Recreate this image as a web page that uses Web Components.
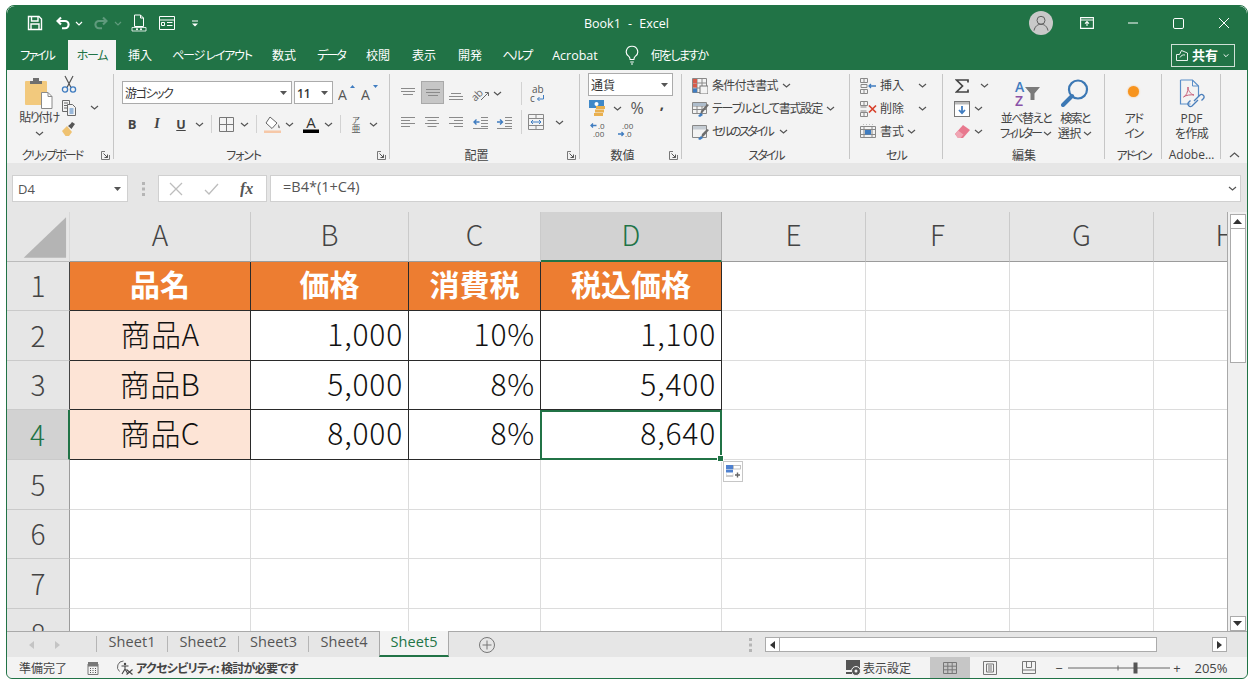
<!DOCTYPE html>
<html lang="ja"><head><meta charset="utf-8"><title>Book1 - Excel</title>
<style>html,body{margin:0;padding:0;background:#fff;overflow:hidden}body{font-family:"Noto Sans CJK JP","Noto Sans",sans-serif}</style>
</head><body><x-window></x-window>
<script>
const JP="'Noto Sans CJK JP','Noto Sans',sans-serif", LAT="'Open Sans','Noto Sans CJK JP',sans-serif";
const GR='#6a6a6a',BL='#3f7cc0',W='#fff';
const ln=(d,c=GR,sw=1)=>`<path d="${d}" fill="none" stroke="${c}" stroke-width="${sw}"/>`;
const lines3=(a)=>ln(a,'#8a8a8a');
const ICONS={
 save:[16,16,ln('M1.5 1.5h10.5l2.5 2.5v10.5h-13z M4.5 1.5v4.5h6.5v-4.5 M4 14.5v-5.5h8v5.5',W,1.4)],
 undo:[16,16,ln('M6 2.5L2.5 6 6 9.5 M3 6h7a3.6 3.6 0 0 1 0 7.2H7',W,2.1)],
 redo:[16,16,ln('M10 2.5L13.5 6 10 9.5 M13 6H6a3.6 3.6 0 0 0 0 7.2h3','#5f9a7c',2.1)],
 chevw:[8,5,ln('M1 1l3 3 3-3',W,1.2)],
 chevd:[8,5,ln('M1 1l3 3 3-3','#5f9a7c',1.2)],
 newdoc:[16,18,ln('M3.5 1h6l3 3v8.5h-9z M9.5 1v3h3',W,1)+ln('M1 13.5h14v3.5H1z',W,.8)+`<circle cx="6" cy="15.2" r="1" fill="#fff"/><circle cx="10" cy="15.2" r="1" fill="#fff"/>`],
 form:[16,14,ln('M.5.5h15v13H.5z M.5 4h15 M8 6.5h5.5 M8 9.5h5.5 M2.5 6.5h3v3h-3z',W,1)],
 qat:[8,7,ln('M1 1h6',W,1)+`<path d="M1 3.5h6L4 6.5z" fill="#fff"/>`],
 bulb:[14,20,ln('M7 1.2a5.6 5.6 0 0 0-3 10.4c.8.7 1 1.4 1.1 2.9h3.8c.1-1.5.3-2.2 1.1-2.9A5.6 5.6 0 0 0 7 1.2z M5.2 17h3.6 M6 19h2',W,1.1)],
 share:[12,11,ln('M.5 4.5h3l2-4 6 2.5v7.500H.5z M4 7.500c1-2 3-3 5-2.500',W,.9)],
 disp:[14,12,ln('M.6.6h12.8v10.8H.6z M.6 3h12.8',W,1.1)+ln('M7 9V4.6 M5 6.6l2-2 2 2',W,1.1)],
 min:[12,2,ln('M1 1h10',W,1)],
 max:[11,11,`<rect x=".5" y=".5" width="10" height="10" rx="1.4" fill="none" stroke="#fff"/>`],
 close:[12,12,ln('M1 1l10 10M11 1L1 11',W,1)],
 avatar:[24,24,`<circle cx="12" cy="12" r="12" fill="#c9c9c9"/><circle cx="12" cy="9.3" r="4" fill="none" stroke="#5d5d5d"/><path d="M5 19.6c1-4.4 3.6-6.3 7-6.3s6 1.9 7 6.3" fill="none" stroke="#5d5d5d"/>`],
 paste:[28,31,`<rect x="0" y="3" width="22" height="24" rx="1" fill="#f2c97d"/><path d="M5 6V3h3V0h6v3h3v3z" fill="#6f6f6f"/><path d="M16.5 14.5h6.5l4 4v12h-10.500z" fill="#fff" stroke="#8a8a8a"/><path d="M23 14.500v4h4" fill="none" stroke="#8a8a8a"/>`],
 cut:[16,18,ln('M12 1L6 12.500 M4 1l6 11.500','#555',1.2)+`<circle cx="4" cy="14.500" r="2.600" fill="none" stroke="${BL}" stroke-width="1.300"/><circle cx="12" cy="14.500" r="2.600" fill="none" stroke="${BL}" stroke-width="1.300"/>`],
 copy:[16,16,ln('M1.5.5h7v11h-7z M3 3h4 M3 5.500h4 M3 8h3')+`<path d="M6.500 4.500h5l3 3v8h-8z" fill="#f3f3f3" stroke="${GR}"/>`+ln('M8.500 9h4 M8.500 11h4 M8.500 13h4',BL)],
 painter:[16,16,`<path d="M1 10l5-5 5 6-3 4H4.500z" fill="#efc271"/><path d="M7 5l2.500-2 1.500-2 3 2-1.500 2-2 3z" fill="#555"/>`],
 caret:[7,4,`<path d="M0 0h7L3.500 4z" fill="#555"/>`],
 chev:[9,5,ln('M1 1l3.500 3L8 1','#555',1.2)],
 chevup:[11,6,ln('M1 5l4.500-4L10 5','#555',1.2)],
 launch:[9,9,ln('M8.500 4v4.500H.5V.5H4','#777')+ln('M2.500 2.500l4 4 M6.500 3.500v3h-3','#555')],
 grow:[18,16,`<text x="0" y="15" font-family="${LAT}" font-size="14" fill="#555">A</text><path d="M12 3l2.500-3L17 3z" fill="${BL}"/>`],
 shrink:[18,16,`<text x="0" y="15" font-family="${LAT}" font-size="14" fill="#555">A</text><path d="M12 0l2.500 3L17 0z" fill="${BL}"/>`],
 border:[15,15,ln('M.5.5h14v14H.5z M7.500.5v14 M.5 7.500h14','#777')],
 fill:[18,18,`<path d="M6 2l7 6-5 5.500L2 8z" fill="#fff" stroke="#666"/><path d="M14 9c1 1.500 2 2.500 2 3.500s-2 1-2-.500z" fill="#888"/><rect x="0" y="15.500" width="17" height="2.500" fill="#f6c8a8"/>`],
 color:[18,18,`<text x="9" y="13" text-anchor="middle" font-family="${LAT}" font-size="15" fill="#333">A</text><rect x="1" y="14.500" width="16" height="3.500" fill="#000"/>`],
 ruby:[14,18,`<text x="7" y="8" text-anchor="middle" font-family="${JP}" font-size="8" fill="#555">ア</text><text x="7" y="17" text-anchor="middle" font-family="${JP}" font-size="9" fill="#555">亜</text>`],
 atop:[16,14,lines3('M1 1.500h14 M1 4.500h14 M3 7.500h10')],
 amid:[16,14,lines3('M1 3.500h14 M1 6.500h14 M3 9.500h10')],
 abot:[16,14,lines3('M3 6.500h10 M1 9.500h14 M1 12.500h14')],
 orient:[18,16,`<text transform="rotate(-45 6 9)" x="-1" y="12" font-family="${LAT}" font-size="10.500" fill="#666">ab</text>`+ln('M9 14L16 7 M13 6.500h3.500V10',GR)],
 wrap:[16,18,`<text x="3" y="8" font-family="${LAT}" font-size="10" fill="#555">ab</text><text x="1" y="17" font-family="${LAT}" font-size="10" fill="#555">c</text>`+ln('M14.500 10v4h-6 M10.500 12l-2 2 2 2',BL)],
 left:[14,12,lines3('M0 1.500h14 M0 4.500h9 M0 7.500h14 M0 10.500h9')],
 center:[14,12,lines3('M0 1.500h14 M2.500 4.500h9 M0 7.500h14 M2.500 10.500h9')],
 right:[14,12,lines3('M0 1.500h14 M5 4.500h9 M0 7.500h14 M5 10.500h9')],
 indl:[15,13,lines3('M8 1.500h7 M8 4.500h7 M8 7.500h7 M8 10.500h7')+ln('M6.500 6H1 M3.500 3.500L1 6l2.500 2.500',BL,1.400)+ln('M0 12.500h15','#8a8a8a')],
 indr:[15,13,lines3('M8 1.500h7 M8 4.500h7 M8 7.500h7 M8 10.500h7')+ln('M0 6h5.500 M3 3.500L5.500 6 3 8.500',BL,1.400)+ln('M0 12.500h15','#8a8a8a')],
 merge:[16,16,ln('M.5.5h15v15H.5z M.5 4.500h15 M.5 11.500h15 M8 .5v4 M8 11.500v4','#888')+ln('M3 8h10 M5 6L3 8l2 2 M11 6l2 2-2 2',BL)],
 cur:[18,16,`<rect x="0" y="0" width="15" height="8" fill="#3f88c8"/><circle cx="7.500" cy="4" r="2" fill="#fff"/><rect x="7" y="6" width="9" height="3" fill="#e9b04f"/><rect x="6" y="9.500" width="9" height="3" fill="#e9b04f"/><rect x="5" y="13" width="9" height="3" fill="#e9b04f"/>`],
 inc:[18,16,ln('M6.500 3.500H1 M3 1.500l-2 2 2 2',BL,1.300)+`<text x="8" y="7" font-family="${LAT}" font-size="8" fill="#555">.0</text><text x="3" y="15" font-family="${LAT}" font-size="8" fill="#555">.00</text>`],
 dec:[18,16,`<text x="5" y="7" font-family="${LAT}" font-size="8" fill="#555">.00</text>`+ln('M1 12h5.500 M4.500 10l2 2-2 2',BL,1.300)+`<text x="8" y="15" font-family="${LAT}" font-size="8" fill="#555">.0</text>`],
 cf:[16,16,ln('M.5.5h14v14H.5z M.5 5h14 M.5 10h14 M5 .5v14 M10 .5v14','#888')+`<rect x="1" y="1" width="4" height="4" fill="#d65a4a"/><rect x="1" y="5.500" width="4" height="4" fill="#d65a4a"/><rect x="1" y="10.500" width="4" height="4" fill="#3f7cc0"/><rect x="8" y="8" width="8" height="8" fill="#f3f3f3" stroke="#777"/>`],
 tbl:[18,16,ln('M.5 1.500h14v11H.5z M.5 5h14 M.5 8.500h14 M5 1.500v11 M10 1.500v11','#888')+`<rect x="1" y="2" width="13" height="3" fill="#aebdcc"/><path d="M17 4l-6 7-3 3 1-4 6-7z" fill="#6e6e6e"/><path d="M6 15l3-3 2 2-3 2z" fill="${BL}"/>`],
 cst:[18,16,ln('M.5 1.500h14v12H.5z','#888')+`<rect x="1" y="2" width="13" height="3.500" fill="#c5ccd3"/><path d="M17 6l-5 6-3 2 1-4 5-5z" fill="#6e6e6e"/><path d="M6 15l3-3 2 2-3 2z" fill="${BL}"/>`],
 cins:[17,16,ln('M.5.5h7v4h-7z M.5 11.500h7v4h-7z M4 .5v4 M4 11.500v4 M1 6.500h6v3H1z','#888')+ln('M16 8H9 M11 6L9 8l2 2',BL,1.300)],
 cdel:[17,16,ln('M.5.5h7v4h-7z M.5 11.500h7v4h-7z M4 .5v4 M4 11.500v4 M.5 6h6 M.5 10h6','#888')+ln('M9 4.500l7 7M16 4.500l-7 7','#d7402b',1.700)],
 cfmt:[17,16,ln('M.5 2.500h15v11H.5z M.5 5.500h15 M.5 10.500h15 M4 2.500v11 M12 2.500v11 M3 .5h.5 M6 .5h.5 M9 .5h.5 M12 .5h.5','#888')+`<rect x="5" y="6" width="6" height="4.500" fill="#3f7cc0"/>`],
 sigma:[14,14,ln('M13 3.500V1H1.500L7.500 7 1.500 13H13v-2.500','#444',1.700)],
 filld:[16,16,`<rect x=".5" y=".5" width="15" height="15" fill="#fff" stroke="#777"/><rect x="1" y="1" width="14" height="2.500" fill="#bbb"/>`+ln('M8 5v7 M5 9l3 3.200L11 9',BL,1.800)],
 eraser:[15,13,`<path d="M0 9l8-9 7 5-7 8H3z" fill="#e8788e"/><path d="M0 9l3-3.500 5.500 4L5.500 13H3z" fill="#f0a5b3"/>`],
 sort:[30,27,`<text x="4" y="11.500" font-family="${LAT}" font-size="14" font-weight="600" fill="#3f7cc0">A</text><text x="4" y="26" font-family="${LAT}" font-size="14" font-weight="600" fill="#8a52a8">Z</text><path d="M14 7h15l-5.500 6.500V20h-4v-6.500z" fill="#7a7a7a"/>`],
 find:[28,28,`<circle cx="17" cy="10.500" r="9" fill="none" stroke="#3c78b4" stroke-width="2.200"/><path d="M11 17L2 26" stroke="#3c78b4" stroke-width="4" stroke-linecap="round"/>`],
 pdf:[26,29,`<path d="M1.500 1h12l6 6v11M1.500 1v24h10" fill="none" stroke="#5b8fc9" stroke-width="1.200"/><path d="M13.500 1v6h6" fill="none" stroke="#5b8fc9"/><path d="M4.500 18c3-1.500 4.500-5 4.500-10 0 3 2 7 6 8-3-.5-8 0-10.500 2z" fill="none" stroke="#c8607a"/><path d="M15 22l6-6a2.500 2.500 0 0 1 3.500 3.500l-2 2 M19 21l-6 6a2.500 2.500 0 0 1-3.500-3.500l2-2" fill="none" stroke="#4a7ebb" stroke-width="1.300"/>`],
 fx:[16,16,`<text x="0" y="13" font-family="'Liberation Serif',serif" font-style="italic" font-weight="700" font-size="16" fill="#555">fx</text>`],
 x:[14,14,ln('M1 1l12 12M13 1L1 13','#bdbdbd',1.300)],
 chk:[15,12,ln('M1 7l4 4 9-10','#bdbdbd',1.300)],
 dots:[3,14,`<rect y="0" width="3" height="3" fill="#b5b5b5"/><rect y="5.500" width="3" height="3" fill="#b5b5b5"/><rect y="11" width="3" height="3" fill="#b5b5b5"/>`],
 tl:[5,8,`<path d="M5 0v8L0 4z" fill="#c4c4c4"/>`],
 tr:[5,8,`<path d="M0 0v8l5-4z" fill="#c4c4c4"/>`],
 plus:[16,16,`<circle cx="8" cy="8" r="7.500" fill="none" stroke="#777"/>`+ln('M8 3.500v9M3.500 8h9','#777')],
 sl:[5,8,`<path d="M5 0v8L0 4z" fill="#333"/>`],
 sr:[5,8,`<path d="M0 0v8l5-4z" fill="#333"/>`],
 su:[9,5,`<path d="M0 5h9L4.500 0z" fill="#333"/>`],
 sd:[9,5,`<path d="M0 0h9L4.500 5z" fill="#333"/>`],
 mac:[12,14,ln('M1 3h10v10.500H1z','#777')+`<rect x="1" y="1" width="10" height="4.500" fill="#777"/><path d="M3 7.500h1M5.500 7.500h1M8 7.500h1M3 9.500h1M5.500 9.500h1M8 9.500h1M3 11.500h1M5.500 11.500h1M8 11.500h1" stroke="#555"/>`],
 acc:[17,15,ln('M6.500 1a6 6 0 0 0-4 10.500','#666')+`<circle cx="8" cy="4" r="1.200" fill="#444"/>`+ln('M4.500 6h7 M8 6v3l-3 5 M8 9l3 5','#444',1.100)+ln('M9.500 9.500l6 5 M15.500 9.500l-6 5','#444',1.100)],
 dset:[15,16,`<rect x="0" y="0" width="14" height="10" fill="#555"/><circle cx="10" cy="11" r="4.500" fill="#555" stroke="#f3f3f3"/><circle cx="10" cy="11" r="1.500" fill="#f3f3f3"/><path d="M0 12h6v2H0z" fill="#555"/>`],
 vnorm:[14,12,ln('M.5.5h13v11H.5z M.5 4.200h13 M.5 7.800h13 M4.800.5v11 M9.200.5v11','#777')],
 vpage:[14,14,ln('M.5.5h13v13H.5z M3.500 3h7v8h-7z M5 5h4 M5 7h4 M5 9h4','#777')],
 vbrk:[14,13,ln('M.5.5h13v12H.5z M4.500.5v6h5v-6 M.5 9h13','#777')],
 slider:[102,12,`<path d="M0 6h102" stroke="#666"/><path d="M50 3.500v5" stroke="#666"/><rect x="65.500" y="0.500" width="4" height="11" fill="#555"/>`],
 qa:[15,13,`<rect x="0" y="0" width="7" height="4" fill="#4f81d0"/><rect x="7.500" y=".5" width="7" height="3.500" fill="#fff" stroke="#aaa" stroke-width=".7"/><rect x="0" y="4.500" width="7" height="3" fill="#4f81d0"/>`+ln('M0 11h7','#999',1)+ln('M.5 8.500v3M7 8.500v3','#ccc',.7)+ln('M11.500 7.500v5M9 10h5','#666',1.400)]
};
class XIcon extends HTMLElement{
 connectedCallback(){
  if(this.shadowRoot)return;
  const [w,h,m]=ICONS[this.getAttribute('n')];
  this.attachShadow({mode:'open'}).innerHTML=`<style>:host{display:inline-flex;flex:none;line-height:0}</style><svg width="${w}" height="${h}" viewBox="0 0 ${w} ${h}" xmlns="http://www.w3.org/2000/svg">${m}</svg>`;
 }
}
customElements.define('x-icon',XIcon);
const I=n=>`<x-icon n="${n}"></x-icon>`;
/* flow helpers: a line of fixed-width boxes and a stack of fixed-height rows, spaced by margins */
const L=(ox,items)=>{let c=ox,o='<div class="l">';for(const [x,w,h,cl] of items){o+=`<div class="i ${cl||''}" style="margin-left:${x-c}px;width:${w}px">${h}</div>`;c=x+w;}return o+'</div>';};
const S=(oy,rows)=>{let c=oy,o='<div class="s">';for(const [y,h,t] of rows){o+=`<div class="r" style="margin-top:${y-c}px;height:${h}px">${t}</div>`;c=y+h;}return o+'</div>';};
const T=(s,ls=0,up=2)=>`<span style='display:inline-block;letter-spacing:${ls}px;margin-top:-${up}px'>${s}</span>`;
const LS=(s,v)=>`<span style='letter-spacing:${v}px'>${s}</span>`;
const FLOW=`.l{display:flex;height:100%;align-items:stretch}.i{flex:none;display:flex;align-items:center;justify-content:center;white-space:nowrap}.i.st{justify-content:flex-start}.i.tp{align-items:flex-start}.s{display:flex;flex-direction:column;width:100%}.r{flex:none;display:flex;align-items:center;justify-content:center;white-space:nowrap}.r>.l{width:100%}`;

class XTitlebar extends HTMLElement{
 connectedCallback(){
  this.attachShadow({mode:'open'}).innerHTML=`<style>:host{display:block;height:34px;background:#217346;color:#fff;font:13px ${LAT};border-radius:8px 8px 0 0}${FLOW}.tt{font-size:12.500px;word-spacing:4px}</style>`+
  L(7,[[27,16,I('save')],[55,16,I('undo')],[75,8,I('chevw')],[93,16,I('redo')],[114,8,I('chevd')],[131,16,I('newdoc')],[159,16,I('form')],[191,8,I('qat')],[560,133,'<span class="tt">Book1 - Excel</span>'],[1029,24,I('avatar')],[1080,14,I('disp')],[1127,12,I('min')],[1173,11,I('max')],[1218,12,I('close')]]);
 }
}
customElements.define('x-titlebar',XTitlebar);

class XTabs extends HTMLElement{
 connectedCallback(){
  const t=(x,w,s,ls)=>[x,w,T(s,ls)];
  this.attachShadow({mode:'open'}).innerHTML=`<style>:host{display:block;height:30px;background:#217346;color:#fff;font:12px ${JP};font-feature-settings:"palt"}${FLOW}
  .i.h{background:#f3f3f3;color:#217346}.sh{border:1px solid #cfe0d6;width:62px;height:21px;display:flex;align-items:center;justify-content:center;gap:4px;font-weight:700;font-size:13px}.sh x-icon:last-child{transform:scale(.8)}</style>`+
  L(7,[t(14,46,'ファイル',-2),[68,48,T('ホーム',-1.3),'h'],t(120,40,'挿入'),t(168,88,'ページ レイアウト',-1.2),t(264,40,'数式'),t(310,42,'データ',-2),t(358,40,'校閲'),t(404,40,'表示'),t(450,40,'開発'),t(496,42,'ヘルプ',-1.7),[546,58,`<span style="font-family:${LAT};font-size:12.500px">Acrobat</span>`],[625,14,I('bulb')],t(645,68,'何をしますか',-1.7),[1171,64,`<div class="sh">${I('share')}${T('共有',0,2)}${I('chevw')}</div>`]]);
 }
}
customElements.define('x-tabs',XTabs);

class XGroup extends HTMLElement{
 connectedCallback(){
  const w=this.getAttribute('w'),lb=this.getAttribute('label'),la=this.hasAttribute('launcher');
  this.attachShadow({mode:'open'}).innerHTML=`<style>:host{display:flex;flex-direction:column;flex:none;width:${w}px;height:93px;position:relative}
  .b{height:77px;overflow:visible;display:block}.f{height:16px;display:flex;align-items:center;justify-content:center;color:#444}.n{flex:1;text-align:center;white-space:nowrap;line-height:16px;margin-top:-1px}.la{width:17px;height:16px;display:flex;align-items:center;justify-content:center;flex:none}
  .sep{position:absolute;right:0;top:4px;bottom:4px;width:1px;background:#c6c6c6}</style><div class="b"><slot></slot></div><div class="f"><div class="n">${lb}</div>${la?`<div class="la">${I('launch')}</div>`:''}</div><div class="sep"></div>`;
 }
}
customElements.define('x-group',XGroup);

class XRibbon extends HTMLElement{
 connectedCallback(){
  const ch=I('chev'),vs='<div style="width:1px;align-self:stretch;margin:2px 0;background:#d2d2d2"></div>';
  const combo=(s,b)=>`<div class="cb" style="${b||''}"><span>${s}</span>${I('caret')}</div>`;
  const clip=L(7,[
   [14,50,S(70,[[78,31,I('paste')],[109,17,T('貼り付け',-1.5)],[128,10,ch]]),'tp'],
   [61,16,S(70,[[75,18,I('cut')],[99,18,I('copy')],[120,18,I('painter')]]),'tp'],
   [90,9,S(70,[[104,6,ch]]),'tp']]);
  const font=S(70,[[81,23,L(114,[[122,170,combo(T('游ゴシック',-1.4,1))],[294,39,combo('<span class="o" style="font-weight:600">11</span>')],[338,18,I('grow')],[361,18,I('shrink')]])],
   [113,22,L(114,[[124,16,`<span style="font:700 13px ${LAT}">B</span>`],[149,16,`<span style="font:italic 700 14px 'Liberation Serif',serif">I</span>`],[173,16,`<span style="font:700 12.500px ${LAT};text-decoration:underline">U</span>`],[195,9,ch],[211,1,vs],[218,16,I('border')],[240,9,ch],[256,1,vs],[264,18,I('fill')],[285,9,ch],[302,18,I('color')],[324,9,ch],[340,1,vs],[349,14,I('ruby')],[369,9,ch]])]]);
  const al=S(70,[[80,27,L(390,[[397,22,I('atop')],[421,23,I('amid'),'ac'],[445,22,I('abot')],[472,18,I('orient')],[493,9,ch],[521,1,vs],[529,16,I('wrap')]])],
   [108,28,L(390,[[401,14,I('left')],[425,14,I('center')],[449,14,I('right')],[473,15,I('indl')],[497,15,I('indr')],[521,1,vs],[528,16,I('merge')],[555,9,ch]])]]);
  const num=S(70,[[73,23,L(580,[[588,85,combo(T('通貨',0,1),'height:23px')]])],
   [97,22,L(580,[[589,18,I('cur')],[613,9,ch],[628,18,`<span style="font-size:16px;color:#555;font-family:${LAT}">%</span>`],[653,18,`<span style="display:inline-block;font-size:15px;font-weight:700;color:#444;font-family:${LAT};margin-top:-10px">,</span>`]])],
   [119,22,L(580,[[590,18,I('inc')],[617,18,I('dec')]])]]);
  const sty=S(70,[[74,23,L(682,[[692,16,I('cf')],[712,68,T('条件付き書式',-.8),'st'],[782,9,ch]])],
   [97,23,L(682,[[692,18,I('tbl')],[712,110,T('テーブルとして書式設定',-1.2),'st'],[826,9,ch]])],
   [120,23,L(682,[[692,18,I('cst')],[712,63,T('セルのスタイル',-2.4),'st'],[779,9,ch]])]]);
  const cel=S(70,[[74,23,L(850,[[860,17,I('cins')],[880,24,T('挿入')],[918,9,ch]])],
   [97,23,L(850,[[860,17,I('cdel')],[880,24,T('削除')],[918,9,ch]])],
   [120,23,L(850,[[860,17,I('cfmt')],[880,24,T('書式')],[907,9,ch]])]]);
  const ed=L(943,[
   [954,32,S(70,[[74,23,L(954,[[955,14,I('sigma')],[980,9,ch]])],[97,23,L(954,[[954,16,I('filld')],[974,9,ch]])],[120,23,L(954,[[955,15,I('eraser')],[974,9,ch]])]]),'tp'],
   [997,58,S(70,[[78,30,I('sort')],[110,16,T('並べ替えと',-1.4)],[126,15,`${T('フィルター',-2.4)}&nbsp;${ch}`]]),'tp'],
   [1057,36,S(70,[[78,30,I('find')],[110,16,T('検索と',-1.7)],[126,15,`${T('選択',-.5)}&nbsp;${ch}`]]),'tp']]);
  const ad=S(70,[[81,20,'<div style="width:11px;height:11px;border-radius:50%;background:#f7941e;box-shadow:0 0 2px #f7b46e"></div>'],[110,16,T('アド',-1.5)],[126,15,T('イン',-1.5)]]);
  const ado=S(70,[[79,29,I('pdf')],[110,16,`<span style="font-family:${LAT}">PDF</span>`],[126,15,T('を作成',-.7)]]);
  this.attachShadow({mode:'open'}).innerHTML=`<style>:host{display:flex;height:93px;background:#f3f3f3;color:#444;font:12px ${JP};font-feature-settings:"palt";position:relative}
  ${FLOW}.cb{width:100%;height:23px;box-sizing:border-box;background:#fff;border:1px solid #ababab;display:flex;align-items:center;justify-content:space-between;padding:0 4px 0 2px;color:#333}.o{font-family:${LAT}}
  .ac{background:#c6c6c6;border:1px solid #a9a9a9;box-sizing:border-box;height:23px;align-self:flex-start;margin-top:1px}
  .col{flex:1;display:flex;align-items:flex-end;justify-content:center;padding-bottom:5px}</style>
  <x-group w="107" label="${LS('クリップボード',-1.9)}" launcher>${clip}</x-group>
  <x-group w="276" label="${LS('フォント',-1.2)}" launcher>${font}</x-group>
  <x-group w="190" label="配置" launcher>${al}</x-group>
  <x-group w="102" label="数値" launcher>${num}</x-group>
  <x-group w="168" label="${LS('スタイル',-2)}">${sty}</x-group>
  <x-group w="93" label="${LS('セル',-1)}">${cel}</x-group>
  <x-group w="162" label="編集">${ed}</x-group>
  <x-group w="57" label="${LS('アドイン',-2)}">${ad}</x-group>
  <x-group w="59" label="<span style='font-family:Open Sans'>Adobe…</span>">${ado}</x-group>
  <div class="col">${I('chevup')}</div>`;
 }
}
customElements.define('x-ribbon',XRibbon);

class XFormula extends HTMLElement{
 connectedCallback(){
  this.attachShadow({mode:'open'}).innerHTML=`<style>:host{display:block;height:49px;background:#e6e6e6;font:13px ${LAT};color:#555;box-sizing:border-box;padding-top:12px}${FLOW}
  .l{height:27px}.bx{background:#fff;border:1px solid #d0d0d0;box-sizing:border-box;width:100%;height:27px;display:flex;align-items:center}.nm{padding:1px 6px 0 5px;justify-content:space-between}.tl{padding:0 0 0 10px;gap:21px}.fm{justify-content:space-between;padding:0 3px 0 12px;font-size:14.500px}</style>`+
  L(7,[[12,116,`<div class="bx nm"><span>D4</span>${I('caret')}</div>`],[142,3,I('dots')],[158,109,`<div class="bx tl">${I('x')}${I('chk')}${I('fx')}</div>`],[270,971,`<div class="bx fm">${T('=B4*(1+C4)',0,4)}${I('chev')}</div>`]]);
 }
}
customElements.define('x-formula',XFormula);

class XSheet extends HTMLElement{
 connectedCallback(){
  const cols=['A','B','C','D','E','F','G','H'],rows=['1','2','3','4','5','6','7','8'];
  const data={1:['品名','価格','消費税','税込価格'],2:['商品A','1,000','10%','1,100'],3:['商品B','5,000','8%','5,400'],4:['商品C','8,000','8%','8,640']};
  let h=`<div class="c corner"><svg width="63" height="50" viewBox="0 0 63 50"><path d="M17 46L60 5v41z" fill="#b4b4b4"/></svg></div>`;
  cols.forEach((c,i)=>h+=`<div class="c ch${c==='D'?' sel':''}">${c}</div>`);
  rows.forEach(r=>{
   h+=`<div class="c rh${r==='4'?' sel':''}${+r<4?' dk':''}">${r}</div>`;
   cols.forEach((c,i)=>{
    const d=data[r]&&data[r][i];
    let cl='c g';
    if(d!==undefined){cl+=' t';if(r==='1')cl+=' hd';else if(i===0)cl+=' nm';else cl+=' num';}
    h+=`<div class="${cl}">${d||''}</div>`;
   });
  });
  this.attachShadow({mode:'open'}).innerHTML=`<style>:host{display:flex;height:419px;background:#eee;position:relative}
  .g0{width:1220px;height:419px;overflow:hidden;position:relative;flex:none;background:#fff;border-right:0}
  .gr{display:grid;grid-template-columns:63px 181px 158px 132px 181px 144px 144px 144px 144px;grid-template-rows:50px 49px 50px 49px 50px 50px 49px 50px 50px;width:1291px;font:30px ${JP};color:#111}
  .c{box-sizing:border-box;display:flex;align-items:center;justify-content:center;white-space:nowrap;padding-bottom:5px}
  .ch,.rh{background:#e6e6e6;color:#444;font-weight:300;font-size:28px}
  .ch{border-right:1px solid #cacaca;border-bottom:1px solid #9b9b9b}.rh{border-bottom:1px solid #cacaca;border-right:1px solid #9b9b9b;padding-bottom:2px}
  .corner{background:#e6e6e6;border-bottom:1px solid #bbb;border-right:1px solid #d8d8d8;padding:0}.corner svg{display:block}
  .ch.sel{background:#d2d2d2;color:#217346;border-bottom:2px solid #217346;border-right-color:#aaa}
  .rh.sel{background:#d2d2d2;color:#217346;border-right:2px solid #217346}.rh.dk{border-right-color:#444}
  .g{border-right:1px solid #dcdcdc;border-bottom:1px solid #dcdcdc}
  .t{border-right-color:#2a2a2a;border-bottom-color:#2a2a2a}
  .hd{background:#ed7d31;color:#fff;font-weight:700;font-size:30px;padding-bottom:6px}
  .nm{background:#fde4d6;font-weight:300;letter-spacing:.4px}.num{justify-content:flex-end;padding-right:5px;font-weight:300;letter-spacing:.8px}
  .sel-box{position:absolute;left:533px;top:198px;width:182px;height:50px;box-sizing:border-box;border:2px solid #217346}
  .hdl{position:absolute;right:-4px;bottom:-4px;width:5px;height:5px;background:#217346;border:1px solid #fff}
  .qa{position:absolute;left:716px;top:249px;width:20px;height:21px;box-sizing:border-box;background:#fff;border:1px solid #c6c6c6;display:flex;align-items:center;justify-content:center}
  .sb{flex:1;position:relative;background:#f0f0f0;border-left:1px solid #a9a9a9;display:flex;flex-direction:column;align-items:center;box-sizing:border-box;padding-top:2px}
  .b{width:16px;height:15px;box-sizing:border-box;background:#fff;border:1px solid #ababab;display:flex;align-items:center;justify-content:center;flex:none}
  .th{width:16px;height:134px;background:#fff;border:1px solid #ababab;box-sizing:border-box;border-top:0;flex:none}.sp{flex:1}</style>
  <div class="g0"><div class="gr">${h}</div><div class="sel-box"><div class="hdl"></div></div><div class="qa">${I('qa')}</div></div>
  <div class="sb"><div class="b">${I('su')}</div><div class="th"></div><div class="sp"></div><div class="b">${I('sd')}</div></div>`;
 }
}
customElements.define('x-sheet',XSheet);

class XSheetTabs extends HTMLElement{
 connectedCallback(){
  const sep='<div style="width:1px;height:100%;background:#b5b5b5"></div>';
  const tb=(x,s,w=70)=>[x,w,T(s,.1,7)];
  this.attachShadow({mode:'open'}).innerHTML=`<style>:host{display:block;height:26px;box-sizing:border-box;background:#e6e6e6;border-top:1px solid #a9a9a9;font:14.500px ${LAT};color:#555}${FLOW}
  .l{height:25px}.a{background:#f3f3f3;color:#217346;border-bottom:2px solid #217346;border-left:1px solid #a9a9a9;border-right:1px solid #a9a9a9;box-sizing:border-box;margin-top:-1px;height:26px}
  .btn{width:15px;height:15px;box-sizing:border-box;background:#fff;border:1px solid #ababab;display:flex;align-items:center;justify-content:center}
  .tk{height:15px;width:100%;box-sizing:border-box;background:#fff;border:1px solid #ababab;border-left:0}
  .sp{height:100%;padding:4px 0 5px;box-sizing:border-box;display:flex}</style>`+
  L(7,[[29,5,I('tl')],[55,5,I('tr')],[96,1,`<div class="sp">${sep}</div>`],tb(96,'Sheet1'),[167,1,`<div class="sp">${sep}</div>`],tb(167,'Sheet2'),[238,1,`<div class="sp">${sep}</div>`],tb(238,'Sheet3',69),[308,1,`<div class="sp">${sep}</div>`],tb(308,'Sheet4'),[379,70,T('Sheet5',.1,3),'a'],[479,16,I('plus')],[749,3,I('dots')],[765,15,`<div class="btn">${I('sl')}</div>`],[780,377,'<div class="tk"></div>'],[1212,15,`<div class="btn">${I('sr')}</div>`]].map((e,i,a)=>{ if(e[0]===96&&e[1]===70)e[0]=97; return e;}).map(e=>{ if(e[1]>=69&&e[1]<=70&&e[0]!==97&&e[0]!==379)e[0]+=1; return e;}));
 }
}
customElements.define('x-sheet-tabs',XSheetTabs);

class XStatus extends HTMLElement{
 connectedCallback(){
  this.attachShadow({mode:'open'}).innerHTML=`<style>:host{display:block;height:21px;background:#f3f3f3;color:#444;font:12px ${JP};font-feature-settings:"palt";border-radius:0 0 6px 6px;overflow:hidden}${FLOW}.on{background:#c6c6c6}.o{font-family:${LAT};font-size:13px}</style>`+
  L(7,[[19,48,'準備完了'],[87,12,I('mac')],[117,17,I('acc')],[136,163,T('<b>アクセシビリティ: 検討が必要です</b>',-.7,0),'st'],[846,15,I('dset')],[863,48,'表示設定'],[930,40,I('vnorm'),'on'],[983,14,I('vpage')],[1022,14,I('vbrk')],[1054,10,'<span class="o">−</span>'],[1068,102,I('slider')],[1172,10,'<span class="o">+</span>'],[1192,38,'<span class="o">205%</span>']]);
 }
}
customElements.define('x-status',XStatus);

class XWindow extends HTMLElement{
 connectedCallback(){
  this.attachShadow({mode:'open'}).innerHTML=`<style>:host{display:flex;flex-direction:column;box-sizing:border-box;width:1242px;height:674px;margin:5px 0 0 6px;border:1px solid #217346;border-radius:8px 8px 6px 6px;overflow:hidden;background:#f3f3f3}</style>
  <x-titlebar></x-titlebar><x-tabs></x-tabs><x-ribbon></x-ribbon><x-formula></x-formula><x-sheet></x-sheet><x-sheet-tabs></x-sheet-tabs><x-status></x-status>`;
 }
}
customElements.define('x-window',XWindow);
</script></body></html>
